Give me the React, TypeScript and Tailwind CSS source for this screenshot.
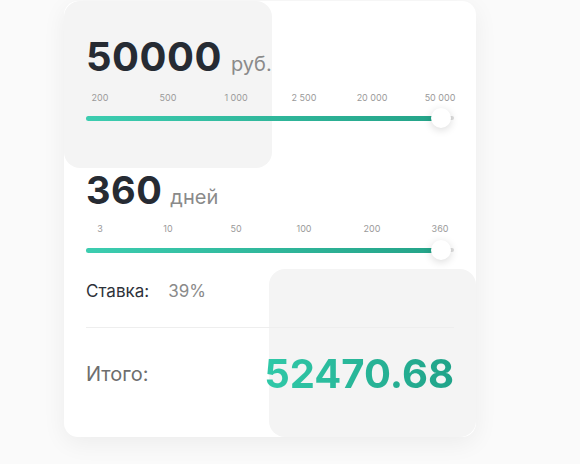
import React from 'react';

const font = { fontFamily: 'Inter, "Noto Sans", sans-serif' };

const Ticks = ({ labels }: { labels: string[] }) => (
  <div className="-mx-[20px] flex text-[9px] leading-none text-[#9a9a9a]">
    {labels.map((l) => (
      <span key={l} className="w-[68px] text-center">
        {l}
      </span>
    ))}
  </div>
);

const Slider = ({ value }: { value: number }) => (
  <div className="relative flex h-[22px] items-center">
    <div className="h-[4px] w-full rounded-full bg-[#dcdcdc]" />
    <div
      className="absolute left-0 h-[5px] rounded-full bg-gradient-to-r from-[#3ccdb0] to-[#24a388]"
      style={{ width: `${value}%` }}
    />
    <div
      className="absolute h-[20px] w-[20px] -translate-x-1/2 rounded-full bg-white shadow-[0_2px_8px_rgba(0,0,0,0.15)]"
      style={{ left: `${value}%` }}
    />
  </div>
);

const App = () => {
  return (
    <div className="min-h-[464px] w-[580px] bg-[#fafafa] pl-[64px] pt-[1px]" style={font}>
      <div className="relative h-[436px] w-[412px] overflow-hidden rounded-[14px] bg-white shadow-[0_6px_24px_rgba(0,0,0,0.06)]">
        {/* decorative blocks */}
        <div className="absolute left-0 top-0 h-[167px] w-[208px] rounded-[16px] bg-[#f4f4f4]" />
        <div className="absolute bottom-0 right-0 h-[168px] w-[207px] rounded-[16px] bg-[#f4f4f4]" />

        <div className="relative px-[22px] pt-[36px]">
          <div className="flex items-baseline">
            <span className="text-[40px] font-bold leading-none tracking-[0.5px] text-[#262b33]">50000</span>
            <span className="ml-[9px] text-[20px] leading-none text-[#8a8a8a]">руб.</span>
          </div>
          <div className="mt-[16px]">
            <Ticks labels={['200', '500', '1 000', '2 500', '20 000', '50 000']} />
          </div>
          <div className="mt-[5px]">
            <Slider value={96.5} />
          </div>

          <div className="mt-[42px] flex items-baseline">
            <span className="text-[38px] font-bold leading-none tracking-[0.5px] text-[#262b33]">360</span>
            <span className="ml-[8px] text-[20px] leading-none text-[#8a8a8a]">дней</span>
          </div>
          <div className="mt-[15px]">
            <Ticks labels={['3', '10', '50', '100', '200', '360']} />
          </div>
          <div className="mt-[6px]">
            <Slider value={96.5} />
          </div>

          <div className="mt-[22px] flex items-baseline text-[17px] leading-none">
            <span className="text-[#2e323a]">Ставка:</span>
            <span className="ml-[19px] text-[#8a8a8a]">39%</span>
          </div>
          <div className="mt-[27px] h-px bg-[#eeeeee]" />
          <div className="mt-[26px] flex items-center justify-between">
            <span className="text-[20px] text-[#6e6e6e]">Итого:</span>
            <span className="bg-gradient-to-r from-[#30c9a8] to-[#20a389] bg-clip-text text-[40px] font-bold leading-none text-transparent">
              52470.68
            </span>
          </div>
        </div>
      </div>
    </div>
  );
};

export default App;
